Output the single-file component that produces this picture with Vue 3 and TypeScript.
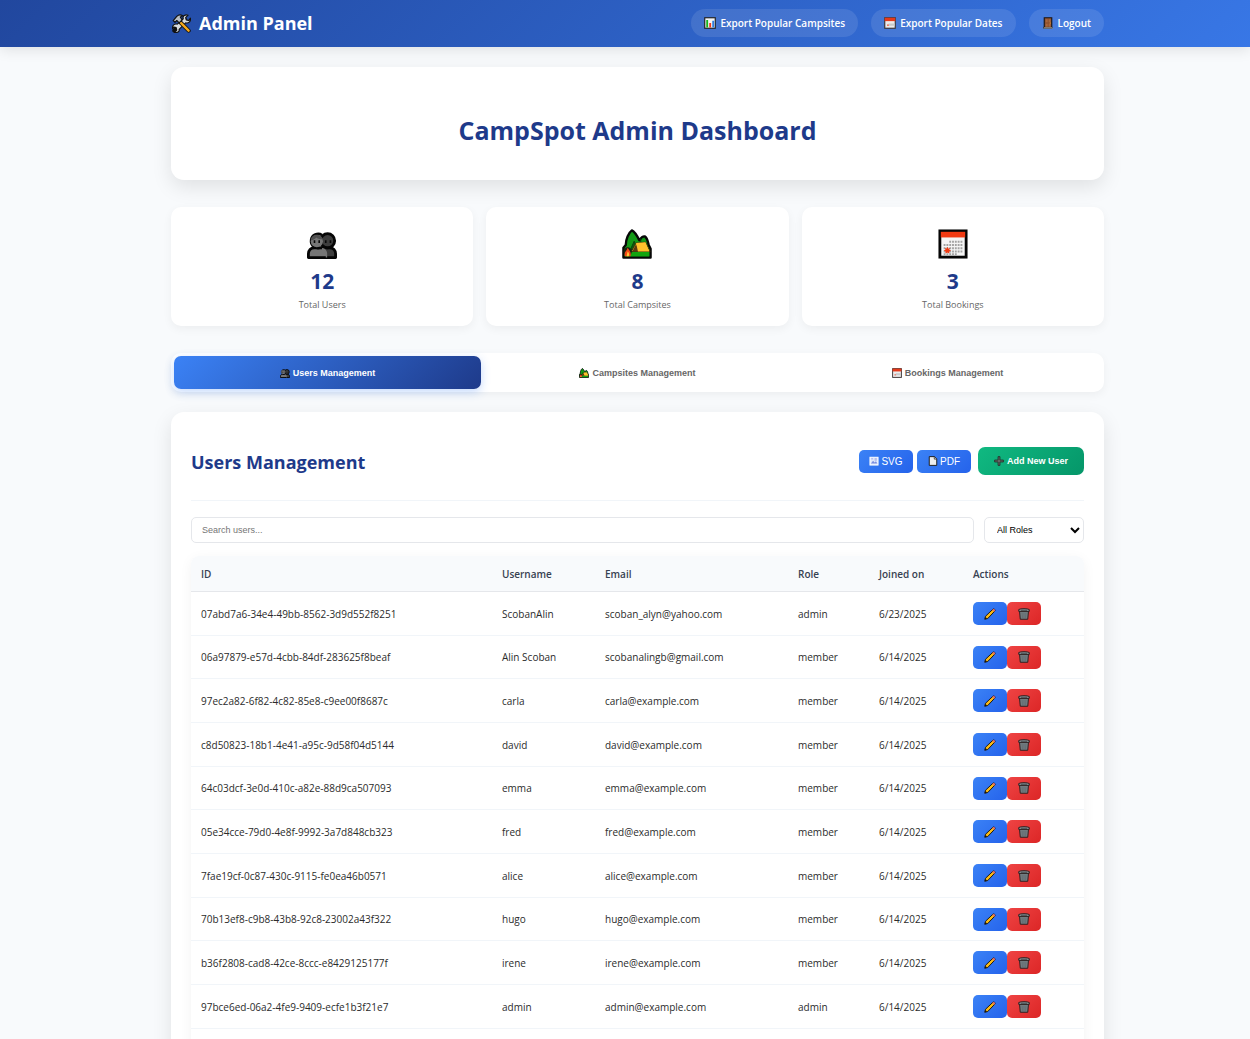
<script setup lang="ts">
import { computed, ref } from 'vue'

interface User {
  id: string
  username: string
  email: string
  role: 'admin' | 'member'
  joined: string
}

const users: User[] = [
  { id: '07abd7a6-34e4-49bb-8562-3d9d552f8251', username: 'ScobanAlin', email: 'scoban_alyn@yahoo.com', role: 'admin', joined: '6/23/2025' },
  { id: '06a97879-e57d-4cbb-84df-283625f8beaf', username: 'Alin Scoban', email: 'scobanalingb@gmail.com', role: 'member', joined: '6/14/2025' },
  { id: '97ec2a82-6f82-4c82-85e8-c9ee00f8687c', username: 'carla', email: 'carla@example.com', role: 'member', joined: '6/14/2025' },
  { id: 'c8d50823-18b1-4e41-a95c-9d58f04d5144', username: 'david', email: 'david@example.com', role: 'member', joined: '6/14/2025' },
  { id: '64c03dcf-3e0d-410c-a82e-88d9ca507093', username: 'emma', email: 'emma@example.com', role: 'member', joined: '6/14/2025' },
  { id: '05e34cce-79d0-4e8f-9992-3a7d848cb323', username: 'fred', email: 'fred@example.com', role: 'member', joined: '6/14/2025' },
  { id: '7fae19cf-0c87-430c-9115-fe0ea46b0571', username: 'alice', email: 'alice@example.com', role: 'member', joined: '6/14/2025' },
  { id: '70b13ef8-c9b8-43b8-92c8-23002a43f322', username: 'hugo', email: 'hugo@example.com', role: 'member', joined: '6/14/2025' },
  { id: 'b36f2808-cad8-42ce-8ccc-e8429125177f', username: 'irene', email: 'irene@example.com', role: 'member', joined: '6/14/2025' },
  { id: '97bce6ed-06a2-4fe9-9409-ecfe1b3f21e7', username: 'admin', email: 'admin@example.com', role: 'admin', joined: '6/14/2025' },
  { id: '2d4e81b0-5c3f-4a77-b1d6-7e09c2f4a853', username: 'bob', email: 'bob@example.com', role: 'member', joined: '6/14/2025' },
]

const stats = [
  { icon: 'users', value: 12, label: 'Total Users' },
  { icon: 'camp', value: 8, label: 'Total Campsites' },
  { icon: 'calendar', value: 3, label: 'Total Bookings' },
]

const tabs = [
  { key: 'users', icon: 'users', label: 'Users Management' },
  { key: 'campsites', icon: 'camp', label: 'Campsites Management' },
  { key: 'bookings', icon: 'calendar-small', label: 'Bookings Management' },
]

const activeTab = ref('users')
const search = ref('')
const role = ref('')

const visibleUsers = computed(() =>
  users.filter(
    (u) =>
      (!role.value || u.role === role.value) &&
      (u.username + u.email).toLowerCase().includes(search.value.toLowerCase()),
  ),
)
</script>

<template>
  <div class="page">
    <svg class="sprite" aria-hidden="true">
      <symbol id="i-tools" viewBox="0 0 32 32">
        <path d="M4 28 22 10" stroke="#111" stroke-width="7" stroke-linecap="round" />
        <path d="M20 3c3-2 5-2 7-1l-4 4 1 4 4 1 3-4c1 6-3 9-8 8L12 26c1 4-3 6-8 5l4-4-1-4-4-1-2 3c-1-6 3-9 8-8L19 8c-1-2 0-4 1-5z" fill="#d9dcdf" stroke="#111" stroke-width="2" stroke-linejoin="round" />
        <path d="M14 14 28 28" stroke="#111" stroke-width="7" stroke-linecap="round" />
        <path d="M15 15 28 28" stroke="#f6a81a" stroke-width="4" stroke-linecap="round" />
        <path d="m2 11 6-7c3-3 7-3 10-1l-4 2 3 5-5 5-4-4-3 3z" fill="#b9bec3" stroke="#111" stroke-width="2" stroke-linejoin="round" />
      </symbol>
      <symbol id="i-chart" viewBox="0 0 32 32">
        <rect x="2" y="2" width="28" height="28" fill="#f4f4f4" stroke="#1b1b1b" stroke-width="3" />
        <rect x="6" y="8" width="5" height="20" fill="#16b51e" />
        <rect x="14" y="16" width="5" height="12" fill="#f03a17" />
        <rect x="22" y="10" width="5" height="18" fill="#2d7de0" />
      </symbol>
      <symbol id="i-calendar" viewBox="0 0 32 32">
        <rect x="2" y="2" width="28" height="28" fill="#f5f5f5" stroke="#050505" stroke-width="3" />
        <rect x="3" y="3" width="26" height="6" fill="#f23a12" />
        <path d="M12 13.500h15M6 17h21M6 20.500h21M6 24h20M6 27h14" stroke="#a3a3a3" stroke-width="2.200" stroke-dasharray="2 1" />
        <path d="m10 19 1 2 2-1-1 2 2 1-2 1 0 2-2-1-2 1 0-2-2-1 2-1-1-2 2 1z" fill="#f23a12" />
      </symbol>
      <symbol id="i-calendar-small" viewBox="0 0 32 32">
        <rect x="2" y="2" width="28" height="28" fill="#ececec" stroke="#3a3030" stroke-width="3" />
        <rect x="2" y="2" width="28" height="9" fill="#e5391a" />
        <path d="M12 17h16v6H8v-4h4z" fill="#c9c9c9" />
        <rect x="8" y="20" width="5" height="4" fill="#ee7a66" />
      </symbol>
      <symbol id="i-door" viewBox="0 0 32 32">
        <path d="M6 29V2h20v27" fill="#8f5230" stroke="#1a1413" stroke-width="3" />
        <path d="M10 6h5v8h-5zM18 6h5v8h-5zM10 18h5v8h-5zM18 18h5v8h-5z" fill="#a9683f" />
        <rect x="4" y="27" width="24" height="4" fill="#b9b4a8" stroke="#1a1413" />
        <circle cx="22" cy="16" r="1.500" fill="#f5b52a" />
      </symbol>
      <symbol id="i-users" viewBox="0 0 32 32">
        <path d="M16 30.500V20h8c4 0 6.500 3 6.500 6.500v4z" fill="#3d3d3d" stroke="#060606" stroke-width="3" stroke-linejoin="round" />
        <circle cx="22" cy="12.500" r="7.500" fill="#3d3d3d" stroke="#060606" stroke-width="3" />
        <path d="M1.500 30.500v-4C1.500 23 4 20 8 20h7c4 0 6.500 3 6.500 6.500v4z" fill="#767676" />
        <path d="M20 30.500H1.500v-4C1.500 23 4 20 8 20h8" fill="none" stroke="#060606" stroke-width="3" stroke-linejoin="round" />
        <path d="M16 6.500A7.500 7.500 0 1 0 14 20" fill="none" stroke="#060606" stroke-width="3" />
        <circle cx="10.500" cy="13" r="6.500" fill="#767676" />
        <path d="M4 12c0-4 3-6 7-6 3 0 5 2 6 5-4 0-6-1-7-2-2 2-4 3-6 3z" fill="#505050" />
        <path d="M8 12v3M13 12v3M20 12v3M25 12v3" stroke="#080808" stroke-width="1.700" />
      </symbol>
      <symbol id="i-camp" viewBox="0 0 32 32">
        <path d="M1.500 30.500V20L4 17c0-6 3-13 6.500-15.500C14 3 16 7 18.500 12c2-3 4-4.500 6-4 3 2 3 6 4 9l2 4v9.500z" fill="#139a17" stroke="#070707" stroke-width="2.500" stroke-linejoin="round" />
        <path d="M20 10v6M13 13l-4 9h8z" fill="#0b5d0e" stroke="#0b3d0e" />
        <path d="M3 24h26v5H3z" fill="#13a50f" />
        <path d="m10 24 5-9 10-1 5 10z" fill="#ffc12c" stroke="#3a3008" />
        <path d="m11 24 4-8 4 8z" fill="#5a3b10" />
        <path d="M17 24 15 15l10-1 4 10z" fill="#ffc12c" />
        <circle cx="6" cy="24" r="4.500" fill="#17210f" />
        <path d="M3 29c-1-5 2-5 3-9 3 4 4 6 3 9z" fill="#f34717" />
        <path d="M5 29c0-2 1-4 1-5 2 2 2 4 1 5z" fill="#ffc93b" />
      </symbol>
      <symbol id="i-picture" viewBox="0 0 32 32">
        <rect x="3" y="4" width="26" height="25" fill="#dfe7fb" stroke="#fff" stroke-width="3" />
        <path d="m6 24 7-9 5 6 4-4 5 7z" fill="#7b8fe0" />
        <path d="M7 9h6M18 9h7M18 13h7" stroke="#7b8fe0" stroke-width="2" />
      </symbol>
      <symbol id="i-page" viewBox="0 0 32 32">
        <path d="M4 2h17l7 7v21H4z" fill="#eee" stroke="#161616" stroke-width="3" />
        <path d="M20 2v8h8" fill="#bbb" stroke="#161616" stroke-width="2" />
      </symbol>
      <symbol id="i-plus" viewBox="0 0 32 32">
        <path d="M13 2h6v11h11v6H19v11h-6V19H2v-6h11z" fill="#6a6a6a" stroke="#24332d" stroke-width="3" />
      </symbol>
      <symbol id="i-pencil" viewBox="0 0 32 32">
        <path d="m2 30 2-8L24 3c3-2 7 2 5 5L10 28z" fill="#f9b916" stroke="#17130a" stroke-width="2.500" stroke-linejoin="round" />
        <path d="m22 5 2-2c3-2 7 2 5 5l-2 2z" fill="#e26b70" />
        <path d="m2 30 2-6 4 4z" fill="#17130a" />
      </symbol>
      <symbol id="i-trash" viewBox="0 0 32 32">
        <path d="M4 8h24l-2 22H6z" fill="#727c80" stroke="#2a1d1d" stroke-width="2.500" />
        <path d="M2 4c5-3 23-3 28 0v5H2z" fill="#8b9498" stroke="#2a1d1d" stroke-width="2.500" />
        <path d="M8 6h16" stroke="#33393b" stroke-width="2" />
        <path d="m11 13 1 14M16 13v14M21 13l-1 14" stroke="#626c70" stroke-width="2" />
      </symbol>
    </svg>

    <header class="topbar">
      <div class="container topbar-inner">
        <div class="brand">
          <svg class="brand-icon"><use href="#i-tools" /></svg>
          <span>Admin Panel</span>
        </div>
        <nav class="nav">
          <button type="button" class="pill"><svg class="icon"><use href="#i-chart" /></svg>Export Popular Campsites</button>
          <button type="button" class="pill"><svg class="icon"><use href="#i-calendar-small" /></svg>Export Popular Dates</button>
          <button type="button" class="pill"><svg class="icon"><use href="#i-door" /></svg>Logout</button>
        </nav>
      </div>
    </header>

    <main class="main">
      <div class="container">
        <section class="hero">
          <h1>CampSpot Admin Dashboard</h1>
        </section>

        <section class="stats">
          <article v-for="s in stats" :key="s.label" class="stat">
            <svg class="stat-icon"><use :href="'#i-' + s.icon" /></svg>
            <div class="stat-value">{{ s.value }}</div>
            <div class="stat-label">{{ s.label }}</div>
          </article>
        </section>

        <div class="tabs" role="tablist">
          <button
            v-for="t in tabs"
            :key="t.key"
            type="button"
            role="tab"
            class="tab"
            :class="{ active: activeTab === t.key }"
            :aria-selected="activeTab === t.key"
            @click="activeTab = t.key"
          >
            <svg class="icon-small"><use :href="'#i-' + t.icon" /></svg>{{ t.label }}
          </button>
        </div>

        <section class="panel">
          <div class="panel-head">
            <h2>Users Management</h2>
            <div class="panel-actions">
              <button type="button" class="export"><svg class="icon-small"><use href="#i-picture" /></svg>SVG</button>
              <button type="button" class="export"><svg class="icon-small"><use href="#i-page" /></svg>PDF</button>
              <button type="button" class="add"><svg class="icon-small"><use href="#i-plus" /></svg>Add New User</button>
            </div>
          </div>

          <div class="filters">
            <input v-model="search" type="text" placeholder="Search users..." aria-label="Search users" />
            <select v-model="role" aria-label="Role">
              <option value="">All Roles</option>
              <option value="admin">Admin</option>
              <option value="member">Member</option>
            </select>
          </div>

          <table>
            <colgroup>
              <col class="c-id" />
              <col class="c-name" />
              <col class="c-email" />
              <col class="c-role" />
              <col class="c-joined" />
              <col />
            </colgroup>
            <thead>
              <tr>
                <th scope="col">ID</th>
                <th scope="col">Username</th>
                <th scope="col">Email</th>
                <th scope="col">Role</th>
                <th scope="col">Joined on</th>
                <th scope="col">Actions</th>
              </tr>
            </thead>
            <tbody>
              <tr v-for="u in visibleUsers" :key="u.id">
                <td>{{ u.id }}</td>
                <td>{{ u.username }}</td>
                <td>{{ u.email }}</td>
                <td>{{ u.role }}</td>
                <td>{{ u.joined }}</td>
                <td>
                  <div class="row-actions">
                    <button type="button" class="edit" :aria-label="'Edit ' + u.username"><svg class="icon"><use href="#i-pencil" /></svg></button>
                    <button type="button" class="delete" :aria-label="'Delete ' + u.username"><svg class="icon"><use href="#i-trash" /></svg></button>
                  </div>
                </td>
              </tr>
            </tbody>
          </table>
        </section>
      </div>
    </main>
  </div>
</template>

<style>
body {
  margin: 0;
  background: #f8fafc;
}
</style>

<style scoped>
* {
  box-sizing: border-box;
}

.page {
  color: #2b2b2b;
  font: 10px/16px 'Open Sans', 'Noto Sans', sans-serif;
}

.sprite {
  position: absolute;
  width: 0;
  height: 0;
}

.topbar,
.main {
  padding-left: 25px;
}

.container {
  max-width: 933px;
  margin: 0 auto;
}

button {
  display: inline-flex;
  align-items: center;
  justify-content: center;
  border: 0;
  padding: 0;
  color: #fff;
  font-family: 'Liberation Sans', Arial, sans-serif;
  cursor: pointer;
}

.icon {
  width: 12px;
  height: 12px;
  flex: none;
}

.icon-small {
  width: 10px;
  height: 10px;
  flex: none;
}

.topbar {
  position: relative;
  background: linear-gradient(135deg, #21479e, #3877e6);
  box-shadow: 0 3px 13px rgba(0, 0, 0, 0.1);
}

.topbar-inner {
  display: flex;
  align-items: center;
  justify-content: space-between;
  padding: 9px 0 10px;
}

.brand {
  display: flex;
  align-items: center;
  gap: 8px;
  padding-left: 1px;
  color: #fff;
  font-size: 18px;
  font-weight: 700;
  line-height: 28px;
}

.brand-icon {
  width: 19px;
  height: 19px;
}

.nav {
  display: flex;
  gap: 13px;
}

.pill {
  gap: 4px;
  height: 28px;
  padding: 0 13px;
  border-radius: 17px;
  background: rgba(255, 255, 255, 0.1);
  font: 600 10px/16px 'Open Sans', 'Noto Sans', sans-serif;
}

.main {
  padding-top: 20px;
}

.hero {
  padding: 45px 27px 31px;
  border-radius: 13px;
  background: #fff;
  box-shadow: 0 7px 20px rgba(0, 0, 0, 0.1);
  text-align: center;
}

h1 {
  margin: 0;
  color: #1e3a8a;
  font-size: 25px;
  line-height: 37px;
}

.stats {
  display: grid;
  grid-template-columns: repeat(3, 1fr);
  gap: 13px;
  margin-top: 27px;
}

.stat {
  display: flex;
  flex-direction: column;
  align-items: center;
  padding: 22px 20px 12px;
  border-radius: 10px;
  background: #fff;
  box-shadow: 0 3px 10px rgba(0, 0, 0, 0.05);
}

.stat-icon {
  width: 30px;
  height: 30px;
}

.stat-value {
  margin-top: 7px;
  color: #1e3a8a;
  font-size: 21px;
  font-weight: 700;
  line-height: 30px;
}

.stat-label {
  color: #666;
  font-size: 9px;
  line-height: 18px;
}

.tabs {
  display: flex;
  gap: 3px;
  margin-top: 27px;
  padding: 3px;
  border-radius: 10px;
  background: #fff;
  box-shadow: 0 3px 10px rgba(0, 0, 0, 0.05);
}

.tab {
  flex: 1;
  gap: 3px;
  height: 33px;
  border-radius: 7px;
  background: transparent;
  color: #666;
  font-size: 9px;
  font-weight: 700;
}

.tab.active {
  background: linear-gradient(135deg, #3b82f6, #1e3a8a);
  box-shadow: 0 3px 10px rgba(59, 130, 246, 0.3);
  color: #fff;
}

.panel {
  margin-top: 20px;
  padding: 20px;
  border-radius: 13px;
  background: #fff;
  box-shadow: 0 7px 20px rgba(0, 0, 0, 0.1);
}

.panel-head {
  display: flex;
  align-items: flex-start;
  justify-content: space-between;
  padding: 15px 0 23px;
  border-bottom: 1px solid #f1f5f9;
}

h2 {
  margin: 0;
  color: #1e3a8a;
  font-size: 18px;
  line-height: 30px;
}

.panel-actions {
  display: flex;
  align-items: center;
  gap: 4px;
}

.export {
  gap: 2px;
  width: 54px;
  height: 23px;
  border-radius: 5px;
  background: linear-gradient(135deg, #3b82f6, #2563eb);
  font-size: 10px;
}

.add {
  gap: 3px;
  height: 28px;
  margin-left: 3px;
  padding: 0 16px;
  border-radius: 7px;
  background: linear-gradient(135deg, #10b981, #059669);
  font-size: 9px;
  font-weight: 700;
}

.filters {
  display: flex;
  gap: 10px;
  margin: 16px 0 13px;
}

.filters input,
.filters select {
  height: 26px;
  border: 1px solid #e5e7eb;
  border-radius: 5px;
  background: #fff;
  color: #000;
  font: 9px 'Liberation Sans', Arial, sans-serif;
}

.filters input {
  flex: 1;
  min-width: 0;
  padding: 0 10px;
}

.filters input::placeholder {
  color: #757575;
}

.filters select {
  width: 100px;
  padding: 0 0 0 8px;
}

table {
  width: 100%;
  table-layout: fixed;
  border-spacing: 0;
  border-radius: 8px;
  overflow: hidden;
  background: #fff;
  box-shadow: 0 3px 13px rgba(0, 0, 0, 0.05);
}

.c-id {
  width: 301px;
}

.c-name {
  width: 103px;
}

.c-email {
  width: 193px;
}

.c-role {
  width: 81px;
}

.c-joined {
  width: 94px;
}

th,
td {
  padding: 0 10px;
  text-align: left;
}

th {
  height: 36px;
  border-bottom: 1px solid #e5e7eb;
  background: #f8fafc;
  color: #374151;
  font-weight: 600;
}

td {
  height: 44px;
  border-bottom: 1px solid #f1f5f9;
}

tr:nth-child(3n + 2) td {
  height: 43px;
}

.row-actions {
  display: flex;
}

.edit,
.delete {
  width: 34px;
  height: 23px;
  border-radius: 5px;
}

.edit {
  background: linear-gradient(135deg, #3b82f6, #2563eb);
}

.delete {
  background: linear-gradient(135deg, #ef4444, #dc2626);
}
</style>
